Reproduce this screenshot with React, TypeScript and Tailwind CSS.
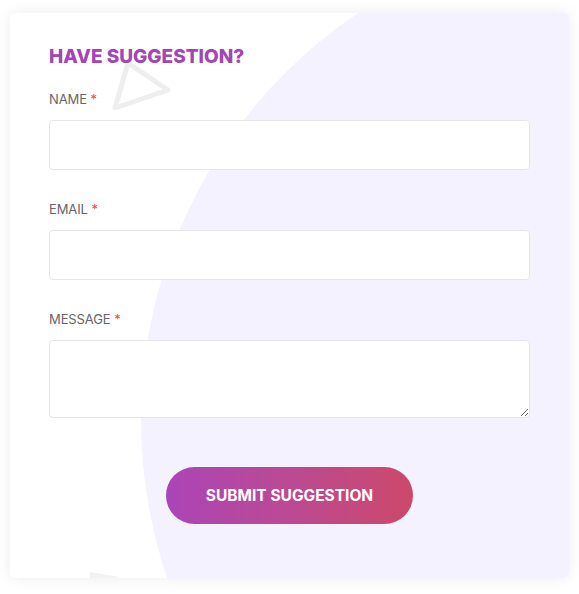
import React from 'react';

const Field: React.FC<{ label: string; area?: boolean }> = ({ label, area }) => (
    <div className="flex flex-col">
        <label className="text-[13px] leading-5 tracking-[-0.1px] text-[#666666] uppercase mb-[11px]">
            {label} <span className="text-[#f0483e]">*</span>
        </label>
        {area ? (
            <textarea className="h-[78px] w-full rounded-[4px] border border-[#e6e6e6] bg-white outline-none" />
        ) : (
            <input className="h-[50px] w-full rounded-[4px] border border-[#e6e6e6] bg-white outline-none" />
        )}
    </div>
);

const App: React.FC = () => {
    return (
        <div className="bg-white w-[579px] h-[594px] pt-[13px] pl-[10px]" style={{ fontFamily: 'Inter, "Noto Sans", sans-serif' }}>
            <div className="relative w-[559px] h-[565px] rounded-[5px] bg-white overflow-hidden shadow-[0_0_14px_rgba(0,0,0,0.08)]">
                {/* decorative background */}
                <div className="absolute left-[131px] top-[-83px] w-[980px] h-[980px] rounded-full bg-[#f4f2fe]" />
                <svg className="absolute left-0 top-0" width="200" height="120" viewBox="0 0 200 120">
                    <polygon points="118,50 158,77 105,95" fill="none" stroke="#eeeeee" strokeWidth="5" strokeLinejoin="round" />
                </svg>
                <svg className="absolute left-[70px] bottom-0" width="60" height="10" viewBox="0 0 60 10">
                    <polygon points="10,4 40,9 10,14" fill="#f2f2f2" />
                </svg>

                <div className="relative flex flex-col px-[39px] pt-[30px]">
                    <h2 className="text-[19px] leading-[28px] font-extrabold text-[#a245b6] mb-[18px]">HAVE SUGGESTION?</h2>
                    <div className="flex flex-col gap-[29px]">
                        <Field label="Name" />
                        <Field label="Email" />
                        <Field label="Message" area />
                    </div>
                    <div className="flex justify-center mt-[49px]">
                        <button className="w-[247px] h-[57px] rounded-full bg-gradient-to-r from-[#ab44b8] to-[#cc4869] text-white text-[15.5px] font-bold">
                            SUBMIT SUGGESTION
                        </button>
                    </div>
                </div>
            </div>
        </div>
    );
};

export default App;
